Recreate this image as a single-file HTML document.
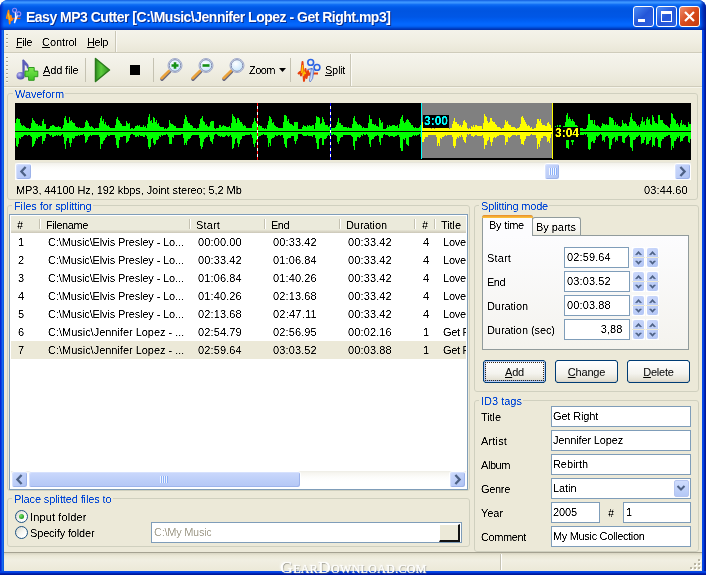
<!DOCTYPE html>
<html><head><meta charset="utf-8"><title>Easy MP3 Cutter</title>
<style>
html,body{margin:0;padding:0;background:#fff;}
body{width:706px;height:575px;position:relative;overflow:hidden;font-family:"Liberation Sans",sans-serif;font-size:11px;color:#000;}
.abs{position:absolute;}
.t{position:absolute;white-space:nowrap;line-height:13px;height:13px;will-change:transform;filter:url(#crisp);}
.blue{color:#0046d5;}
.nf{filter:none;}
u{text-decoration:underline;}
#win{position:absolute;left:0;top:0;width:706px;height:575px;background:#0054e3;border-radius:8px 8px 0 0;overflow:hidden;}
#title{position:absolute;left:0;top:0;width:706px;height:30px;background:linear-gradient(to bottom,#0a55da 0px,#2a7ff5 1px,#3c96ff 2.5px,#2c87fb 3.5px,#1270f5 4.5px,#0562ef 6px,#0058e6 8px,#0055e1 11px,#0057e6 17px,#0060f5 21px,#0468ff 24px,#0464f8 26px,#0058e8 27px,#0048d0 28px,#0038ba 29px,#002fa8 30px);}
#client{position:absolute;left:4px;top:30px;width:698px;height:541px;background:#ece9d8;}
.gb{position:absolute;border:1px solid #d0d0bf;border-radius:3px;box-sizing:border-box;}
.gbl{position:absolute;background:#ece9d8;height:1px;}
.edit{background:#fff;border:1px solid #7f9db9;box-sizing:border-box;}
.btn{position:absolute;box-sizing:border-box;border:1px solid #003c74;border-radius:3px;background:linear-gradient(#fff 0%,#f4f3ee 60%,#e4e1d4 90%,#d6d0c5 100%);text-align:center;line-height:21px;padding-top:1px;letter-spacing:-0.2px;will-change:transform;filter:url(#crisp);}
.cap{position:absolute;top:6px;width:21px;height:21px;box-sizing:border-box;border:1px solid #fff;border-radius:3px;}
.sbtn{position:absolute;width:17px;height:17px;box-sizing:border-box;border:1px solid #fff;border-radius:3px;background:linear-gradient(135deg,#cddafc,#b7c9f6 70%,#adc1f3);box-shadow:inset -1px -1px 0 #9db3ea,inset 1px 1px 0 #d6e1fd;}
</style></head><body>
<svg width="0" height="0" style="position:absolute"><filter id="crisp" x="-0.1" y="-0.2" width="1.2" height="1.4" color-interpolation-filters="sRGB"><feComponentTransfer><feFuncA type="table" tableValues="0 0 0.55 1 1"/></feComponentTransfer></filter></svg>
<div id="win">
<div id="title"></div>
<div class="abs" style="left:0;top:0;width:4px;height:30px;background:linear-gradient(to right,rgba(0,30,180,0.9),rgba(0,40,200,0.5) 50%,rgba(0,60,220,0))"></div>
<div class="abs" style="left:700px;top:0;width:6px;height:30px;background:linear-gradient(to right,rgba(0,40,190,0),rgba(0,30,170,0.7) 50%,rgba(0,20,140,0.95))"></div>
<div class="abs" style="left:0;top:30px;width:4px;height:545px;background:linear-gradient(to right,#0019cf 0,#0831d9 1px,#166aee 2.5px,#0855dd 4px)"></div>
<div class="abs" style="left:702px;top:30px;width:4px;height:545px;background:linear-gradient(to right,#0a4de6 0,#0340e0 1.5px,#0024b4 2.5px,#00138c 4px)"></div>
<div class="abs" style="left:0;top:571px;width:706px;height:4px;background:linear-gradient(#0a4de6 0,#0340e0 1.5px,#0024b4 2.5px,#00138c 4px)"></div>
<svg class="abs" style="left:5px;top:7px" width="18" height="18" viewBox="0 0 18 18"><path d="M1,11.4 L15.5,11.4" stroke="#f0600c" stroke-width="1.2"/><path d="M1.6,11.4 L3.5,3.6 L4.7,16.6 L5.8,8.6 L6.7,13.4 L7.6,11.4" fill="none" stroke="#ff8a12" stroke-width="1.7" stroke-linejoin="round"/><path d="M3.5,6.5 L4.3,13" stroke="#ffe020" stroke-width="1"/><circle cx="9.6" cy="3.2" r="2" fill="none" stroke="#9a8cf6" stroke-width="1.1"/><circle cx="13.8" cy="6.9" r="2" fill="none" stroke="#9a8cf6" stroke-width="1.1"/><path d="M10.4,5.4 L10.6,10 L9.4,16.2 M12.4,8.4 L9.4,16.2" stroke="#f2f4ff" stroke-width="1.3" fill="none"/></svg>
<div class="t nf" style="left:25.8px;top:9px;font-size:14px;font-weight:bold;color:#fff;line-height:16px;height:16px;letter-spacing:-0.5px;text-shadow:1px 1px 0 #0a2a8a">Easy MP3 Cutter [C:\Music\Jennifer Lopez - Get Right.mp3]</div>
<div class="cap" style="left:633px;background:linear-gradient(135deg,#4c8cf5,#2456d8 50%,#2d62e0)"><div class="abs" style="left:4px;top:12px;width:7px;height:3px;background:#fff"></div></div>
<div class="cap" style="left:656px;background:linear-gradient(135deg,#4c8cf5,#2456d8 50%,#2d62e0)"><div class="abs" style="left:4px;top:4px;width:11px;height:11px;box-sizing:border-box;border:1px solid #fff;border-top-width:3px"></div></div>
<div class="cap" style="left:679px;background:linear-gradient(135deg,#ee8c6c,#d84a1c 50%,#c43c10)"><svg width="19" height="19" viewBox="0 0 19 19" style="position:absolute;left:0;top:0"><path d="M5,5 L14,14 M14,5 L5,14" stroke="#fff" stroke-width="2.2"/></svg></div>

<div id="client">
<!-- offset: client origin is (4,30); use wrapper to keep absolute page coords -->
<div class="abs" style="left:-4px;top:-30px;width:706px;height:575px">

<!-- menubar & toolbar -->
<div class="abs" style="left:4px;top:30px;width:698px;height:23px;background:linear-gradient(#f4f3ea,#f0eee2 50%,#e9e6d6)"></div>
<div class="abs" style="left:4px;top:52px;width:698px;height:1px;background:#cfccbb"></div>
<div class="abs" style="left:4px;top:53px;width:698px;height:1px;background:#f7f6ee"></div>
<div class="abs" style="left:4px;top:54px;width:698px;height:32px;background:linear-gradient(#f5f4ec,#f0eee3 50%,#e8e5d5)"></div>
<div class="abs" style="left:4px;top:86px;width:698px;height:1px;background:#cfccbb"></div>
<div class="abs" style="left:4px;top:87px;width:698px;height:1px;background:#f5f4ea"></div>
<div class="abs" style="left:6px;top:34px;width:2px;height:14px;background:repeating-linear-gradient(#a5a291 0 1px,#f8f7f0 1px 2px,transparent 2px 4px)"></div>
<div class="abs" style="left:6px;top:57px;width:2px;height:26px;background:repeating-linear-gradient(#a5a291 0 1px,#f8f7f0 1px 2px,transparent 2px 4px)"></div>
<div class="abs" style="left:115px;top:31px;width:1px;height:21px;background:#cac7b6"></div>
<div class="abs" style="left:116px;top:31px;width:1px;height:21px;background:#fbfaf6"></div>
<div class="abs" style="left:350px;top:54px;width:1px;height:32px;background:#cac7b6"></div>
<div class="abs" style="left:351px;top:54px;width:1px;height:32px;background:#fbfaf6"></div>
<div class="t " style="left:16px;top:36px;letter-spacing:-0.43px;"><u>F</u>ile</div><div class="t " style="left:42px;top:36px;letter-spacing:-0.07px;"><u>C</u>ontrol</div><div class="t " style="left:87px;top:36px;letter-spacing:-0.41px;"><u>H</u>elp</div>
<div class="t " style="left:43px;top:64px;letter-spacing:-0.15px;"><u>A</u>dd file</div><div class="t " style="left:249px;top:64px;letter-spacing:-0.53px;">Zoom</div><div class="t " style="left:324.5px;top:64px;letter-spacing:-0.28px;"><u>S</u>plit</div>
<div class="abs" style="left:85px;top:58px;width:1px;height:24px;background:#c5c2b2"></div>
<div class="abs" style="left:153px;top:58px;width:1px;height:24px;background:#c5c2b2"></div>
<div class="abs" style="left:290px;top:58px;width:1px;height:24px;background:#c5c2b2"></div>
<!-- add file icon -->
<svg class="abs" style="left:12px;top:56px" width="30" height="28" viewBox="0 0 30 28"><defs><radialGradient id="nh" cx="0.35" cy="0.35" r="0.75"><stop offset="0" stop-color="#c4c4f4"/><stop offset="0.5" stop-color="#6c6cc8"/><stop offset="1" stop-color="#4444a0"/></radialGradient><linearGradient id="pl" x1="0" y1="0" x2="0" y2="1"><stop offset="0" stop-color="#7be84f"/><stop offset="1" stop-color="#3fc224"/></linearGradient></defs>
<path d="M10.6,4 C11.5,3.6 12.2,4 12.6,4.8 C13.6,6.8 16.6,7.6 16.4,11 C16.3,12 15.6,12.6 15.2,12.2 C15.4,9.8 13.6,9.2 12.4,8.6 L12.4,19.5 L10.8,19.5 Z" fill="#5d5dbc" stroke="#4a4aa8" stroke-width="0.5"/>
<ellipse cx="8.6" cy="19.8" rx="4.1" ry="3.8" fill="url(#nh)"/>
<path d="M16.6,11.5 h5.6 v3.6 h3.6 v5.6 h-3.6 v3.6 h-5.6 v-3.6 h-3.6 v-5.6 h3.6z" fill="url(#pl)" stroke="#2f9a1f" stroke-width="1" stroke-linejoin="round"/>
</svg>
<!-- play -->
<svg class="abs" style="left:94px;top:57px" width="18" height="26" viewBox="0 0 18 26"><defs><linearGradient id="pg" x1="0" y1="0" x2="1" y2="0"><stop offset="0" stop-color="#2f8f1f"/><stop offset="0.4" stop-color="#5ccc3c"/><stop offset="1" stop-color="#2f8f1f"/></linearGradient></defs><path d="M1.5,1.5 L15.5,13 L1.5,24.5Z" fill="url(#pg)" stroke="#2a7a1c" stroke-width="1.5" stroke-linejoin="round"/></svg>
<div class="abs" style="left:130px;top:65px;width:10px;height:10px;background:#000"></div>
<!-- magnifiers -->
<svg class="abs" style="left:160px;top:56px" width="26" height="26" viewBox="0 0 26 26"><defs><radialGradient id="g160" cx="0.4" cy="0.35" r="0.7"><stop offset="0" stop-color="#ffffff"/><stop offset="1" stop-color="#c4e4fb"/></radialGradient></defs><path d="M2,23.2 L9.6,15.6" stroke="#66667e" stroke-width="3.4" stroke-linecap="round"/><path d="M1.6,22.2 L9.2,14.8" stroke="#e9a23b" stroke-width="2.6" stroke-linecap="round"/><circle cx="15" cy="9.5" r="7" fill="#eef7ff" stroke="#9aa3c4" stroke-width="0.9"/><circle cx="15" cy="9.5" r="5.8" fill="url(#g160)" stroke="#7f88ad" stroke-width="1"/><path d="M11.5,9.5 h7 M15,6.2 v6.6" stroke="#149014" stroke-width="2.6"/></svg>
<svg class="abs" style="left:191px;top:56px" width="26" height="26" viewBox="0 0 26 26"><defs><radialGradient id="g191" cx="0.4" cy="0.35" r="0.7"><stop offset="0" stop-color="#ffffff"/><stop offset="1" stop-color="#c4e4fb"/></radialGradient></defs><path d="M2,23.2 L9.6,15.6" stroke="#66667e" stroke-width="3.4" stroke-linecap="round"/><path d="M1.6,22.2 L9.2,14.8" stroke="#e9a23b" stroke-width="2.6" stroke-linecap="round"/><circle cx="15" cy="9.5" r="7" fill="#eef7ff" stroke="#9aa3c4" stroke-width="0.9"/><circle cx="15" cy="9.5" r="5.8" fill="url(#g191)" stroke="#7f88ad" stroke-width="1"/><path d="M11.5,9.5 h7" stroke="#149014" stroke-width="2.6"/></svg>
<svg class="abs" style="left:222px;top:56px" width="26" height="26" viewBox="0 0 26 26"><defs><radialGradient id="g222" cx="0.4" cy="0.35" r="0.7"><stop offset="0" stop-color="#ffffff"/><stop offset="1" stop-color="#c4e4fb"/></radialGradient></defs><path d="M2,23.2 L9.6,15.6" stroke="#66667e" stroke-width="3.4" stroke-linecap="round"/><path d="M1.6,22.2 L9.2,14.8" stroke="#e9a23b" stroke-width="2.6" stroke-linecap="round"/><circle cx="15" cy="9.5" r="7" fill="#eef7ff" stroke="#9aa3c4" stroke-width="0.9"/><circle cx="15" cy="9.5" r="5.8" fill="url(#g222)" stroke="#7f88ad" stroke-width="1"/></svg>
<svg class="abs" style="left:279px;top:68px" width="7" height="4" viewBox="0 0 7 4"><path d="M0,0 h7 l-3.5,4z" fill="#000"/></svg>
<!-- split icon -->
<svg class="abs" style="left:296px;top:56px" width="26" height="28" viewBox="0 0 26 28"><defs><linearGradient id="bl" x1="0" y1="0" x2="1" y2="0"><stop offset="0" stop-color="#ffffff"/><stop offset="1" stop-color="#7fa8f0"/></linearGradient></defs>
<path d="M2,18 L4,16 L5,19.5 L6.5,6 L8,25 L9.5,13 L10.5,22 L12,15 L13,19 L14,17.6 L22,17.6" fill="none" stroke="#e8400c" stroke-width="2" stroke-linejoin="round"/>
<path d="M5.6,17 L6.5,9 L7.4,20 L8.6,16 L9.6,18" fill="none" stroke="#ffc400" stroke-width="1.1"/>
<path d="M15.4,12.4 L18,14.2 L16.6,22.5 L14.2,26 L13.4,25 Z" fill="url(#bl)" stroke="#4a68c8" stroke-width="0.7"/>
<path d="M11.5,13.5 L16.5,12.5" stroke="#4a68c8" stroke-width="1.2"/>
<circle cx="14.7" cy="6.4" r="2.9" fill="none" stroke="#2a63e4" stroke-width="1.6"/>
<circle cx="21" cy="11.4" r="2.9" fill="none" stroke="#2a63e4" stroke-width="1.6"/>
</svg>

<!-- Waveform group -->
<div class="gb" style="left:7px;top:93px;width:691px;height:107px"></div>
<div class="gbl" style="left:13px;top:93px;width:52px"></div>
<div class="t blue" style="left:15px;top:88px;letter-spacing:-0.09px;">Waveform</div>
<svg class="abs" style="left:15px;top:103px" width="676" height="57" viewBox="0 0 676 57" shape-rendering="crispEdges">
<rect width="676" height="57" fill="#000"/>
<rect x="407" y="0" width="130" height="55" fill="#808080"/>
<path d="M0,20 L1,20 L1,16 L2,16 L2,15 L3,15 L3,16 L4,16 L4,16 L5,16 L5,20 L6,20 L6,22 L7,22 L7,23 L8,23 L8,22 L9,22 L9,23 L10,23 L10,24 L11,24 L11,25 L12,25 L12,25 L13,25 L13,25 L14,25 L14,26 L15,26 L15,25 L16,25 L16,20 L17,20 L17,15 L18,15 L18,17 L19,17 L19,18 L20,18 L20,20 L21,20 L21,21 L22,21 L22,21 L23,21 L23,23 L24,23 L24,22 L25,22 L25,23 L26,23 L26,23 L27,23 L27,18 L28,18 L28,16 L29,16 L29,21 L30,21 L30,21 L31,21 L31,26 L32,26 L32,26 L33,26 L33,26 L34,26 L34,25 L35,25 L35,23 L36,23 L36,23 L37,23 L37,22 L38,22 L38,22 L39,22 L39,23 L40,23 L40,24 L41,24 L41,24 L42,24 L42,24 L43,24 L43,23 L44,23 L44,24 L45,24 L45,24 L46,24 L46,26 L47,26 L47,25 L48,25 L48,22 L49,22 L49,15 L50,15 L50,13 L51,13 L51,17 L52,17 L52,20 L53,20 L53,20 L54,20 L54,14 L55,14 L55,18 L56,18 L56,17 L57,17 L57,19 L58,19 L58,20 L59,20 L59,20 L60,20 L60,23 L61,23 L61,24 L62,24 L62,24 L63,24 L63,25 L64,25 L64,24 L65,24 L65,25 L66,25 L66,25 L67,25 L67,25 L68,25 L68,25 L69,25 L69,24 L70,24 L70,19 L71,19 L71,17 L72,17 L72,18 L73,18 L73,20 L74,20 L74,23 L75,23 L75,24 L76,24 L76,23 L77,23 L77,24 L78,24 L78,25 L79,25 L79,26 L80,26 L80,25 L81,25 L81,25 L82,25 L82,25 L83,25 L83,25 L84,25 L84,20 L85,20 L85,15 L86,15 L86,13 L87,13 L87,18 L88,18 L88,16 L89,16 L89,21 L90,21 L90,19 L91,19 L91,22 L92,22 L92,23 L93,23 L93,22 L94,22 L94,24 L95,24 L95,25 L96,25 L96,25 L97,25 L97,25 L98,25 L98,25 L99,25 L99,25 L100,25 L100,22 L101,22 L101,16 L102,16 L102,14 L103,14 L103,17 L104,17 L104,18 L105,18 L105,20 L106,20 L106,21 L107,21 L107,23 L108,23 L108,23 L109,23 L109,23 L110,23 L110,23 L111,23 L111,18 L112,18 L112,20 L113,20 L113,21 L114,21 L114,20 L115,20 L115,26 L116,26 L116,25 L117,25 L117,25 L118,25 L118,26 L119,26 L119,25 L120,25 L120,23 L121,23 L121,23 L122,23 L122,22 L123,22 L123,23 L124,23 L124,22 L125,22 L125,24 L126,24 L126,24 L127,24 L127,24 L128,24 L128,22 L129,22 L129,24 L130,24 L130,23 L131,23 L131,25 L132,25 L132,21 L133,21 L133,14 L134,14 L134,11 L135,11 L135,18 L136,18 L136,17 L137,17 L137,20 L138,20 L138,14 L139,14 L139,15 L140,15 L140,19 L141,19 L141,17 L142,17 L142,21 L143,21 L143,20 L144,20 L144,23 L145,23 L145,24 L146,24 L146,24 L147,24 L147,24 L148,24 L148,24 L149,24 L149,26 L150,26 L150,25 L151,25 L151,26 L152,26 L152,25 L153,25 L153,24 L154,24 L154,17 L155,17 L155,20 L156,20 L156,21 L157,21 L157,21 L158,21 L158,22 L159,22 L159,23 L160,23 L160,23 L161,23 L161,25 L162,25 L162,25 L163,25 L163,25 L164,25 L164,25 L165,25 L165,25 L166,25 L166,25 L167,25 L167,25 L168,25 L168,21 L169,21 L169,16 L170,16 L170,12 L171,12 L171,14 L172,14 L172,18 L173,18 L173,20 L174,20 L174,20 L175,20 L175,22 L176,22 L176,22 L177,22 L177,23 L178,23 L178,25 L179,25 L179,25 L180,25 L180,25 L181,25 L181,26 L182,26 L182,25 L183,25 L183,25 L184,25 L184,21 L185,21 L185,16 L186,16 L186,15 L187,15 L187,13 L188,13 L188,18 L189,18 L189,19 L190,19 L190,22 L191,22 L191,21 L192,21 L192,23 L193,23 L193,24 L194,24 L194,23 L195,23 L195,19 L196,19 L196,18 L197,18 L197,18 L198,18 L198,18 L199,18 L199,25 L200,25 L200,26 L201,26 L201,25 L202,25 L202,25 L203,25 L203,25 L204,25 L204,22 L205,22 L205,22 L206,22 L206,24 L207,24 L207,23 L208,23 L208,22 L209,22 L209,23 L210,23 L210,23 L211,23 L211,24 L212,24 L212,24 L213,24 L213,24 L214,24 L214,23 L215,23 L215,25 L216,25 L216,20 L217,20 L217,11 L218,11 L218,13 L219,13 L219,14 L220,14 L220,16 L221,16 L221,20 L222,20 L222,15 L223,15 L223,15 L224,15 L224,17 L225,17 L225,19 L226,19 L226,19 L227,19 L227,21 L228,21 L228,23 L229,23 L229,22 L230,22 L230,23 L231,23 L231,25 L232,25 L232,25 L233,25 L233,25 L234,25 L234,25 L235,25 L235,25 L236,25 L236,25 L237,25 L237,21 L238,21 L238,19 L239,19 L239,15 L240,15 L240,18 L241,18 L241,20 L242,20 L242,22 L243,22 L243,23 L244,23 L244,22 L245,22 L245,23 L246,23 L246,23 L247,23 L247,25 L248,25 L248,25 L249,25 L249,26 L250,26 L250,25 L251,25 L251,26 L252,26 L252,22 L253,22 L253,18 L254,18 L254,13 L255,13 L255,14 L256,14 L256,16 L257,16 L257,20 L258,20 L258,19 L259,19 L259,22 L260,22 L260,23 L261,23 L261,24 L262,24 L262,24 L263,24 L263,25 L264,25 L264,25 L265,25 L265,25 L266,25 L266,25 L267,25 L267,25 L268,25 L268,19 L269,19 L269,12 L270,12 L270,12 L271,12 L271,13 L272,13 L272,18 L273,18 L273,16 L274,16 L274,20 L275,20 L275,21 L276,21 L276,21 L277,21 L277,22 L278,22 L278,23 L279,23 L279,19 L280,19 L280,19 L281,19 L281,19 L282,19 L282,19 L283,19 L283,26 L284,26 L284,26 L285,26 L285,26 L286,26 L286,26 L287,26 L287,24 L288,24 L288,22 L289,22 L289,23 L290,23 L290,23 L291,23 L291,24 L292,24 L292,22 L293,22 L293,23 L294,23 L294,22 L295,22 L295,23 L296,23 L296,23 L297,23 L297,22 L298,22 L298,22 L299,22 L299,26 L300,26 L300,20 L301,20 L301,13 L302,13 L302,14 L303,14 L303,14 L304,14 L304,15 L305,15 L305,21 L306,21 L306,20 L307,20 L307,14 L308,14 L308,16 L309,16 L309,19 L310,19 L310,22 L311,22 L311,22 L312,22 L312,22 L313,22 L313,24 L314,24 L314,23 L315,23 L315,25 L316,25 L316,25 L317,25 L317,25 L318,25 L318,25 L319,25 L319,25 L320,25 L320,24 L321,24 L321,22 L322,22 L322,19 L323,19 L323,15 L324,15 L324,20 L325,20 L325,20 L326,20 L326,22 L327,22 L327,22 L328,22 L328,24 L329,24 L329,24 L330,24 L330,24 L331,24 L331,24 L332,24 L332,25 L333,25 L333,24 L334,24 L334,25 L335,25 L335,25 L336,25 L336,25 L337,25 L337,21 L338,21 L338,15 L339,15 L339,13 L340,13 L340,18 L341,18 L341,19 L342,19 L342,21 L343,21 L343,22 L344,22 L344,21 L345,21 L345,22 L346,22 L346,23 L347,23 L347,25 L348,25 L348,24 L349,24 L349,25 L350,25 L350,25 L351,25 L351,25 L352,25 L352,25 L353,25 L353,20 L354,20 L354,12 L355,12 L355,16 L356,16 L356,16 L357,16 L357,21 L358,21 L358,21 L359,21 L359,22 L360,22 L360,21 L361,21 L361,23 L362,23 L362,23 L363,23 L363,24 L364,24 L364,15 L365,15 L365,17 L366,17 L366,20 L367,20 L367,19 L368,19 L368,26 L369,26 L369,26 L370,26 L370,26 L371,26 L371,25 L372,25 L372,22 L373,22 L373,24 L374,24 L374,22 L375,22 L375,23 L376,23 L376,23 L377,23 L377,22 L378,22 L378,22 L379,22 L379,22 L380,22 L380,23 L381,23 L381,23 L382,23 L382,22 L383,22 L383,25 L384,25 L384,21 L385,21 L385,16 L386,16 L386,14 L387,14 L387,12 L388,12 L388,18 L389,18 L389,20 L390,20 L390,19 L391,19 L391,17 L392,17 L392,16 L393,16 L393,17 L394,17 L394,19 L395,19 L395,20 L396,20 L396,22 L397,22 L397,22 L398,22 L398,24 L399,24 L399,25 L400,25 L400,24 L401,24 L401,25 L402,25 L402,25 L403,25 L403,25 L404,25 L404,24 L405,24 L405,22 L406,22 L406,15 L407,15 L407,42 L406,42 L406,34 L405,34 L405,31 L404,31 L404,32 L403,32 L403,32 L402,32 L402,33 L401,33 L401,32 L400,32 L400,33 L399,33 L399,32 L398,32 L398,33 L397,33 L397,34 L396,34 L396,34 L395,34 L395,34 L394,34 L394,43 L393,43 L393,42 L392,42 L392,41 L391,41 L391,35 L390,35 L390,37 L389,37 L389,36 L388,36 L388,48 L387,48 L387,48 L386,48 L386,45 L385,45 L385,34 L384,34 L384,32 L383,32 L383,32 L382,32 L382,33 L381,33 L381,33 L380,33 L380,34 L379,34 L379,34 L378,34 L378,33 L377,33 L377,33 L376,33 L376,33 L375,33 L375,34 L374,34 L374,33 L373,33 L373,32 L372,32 L372,32 L371,32 L371,32 L370,32 L370,31 L369,31 L369,32 L368,32 L368,35 L367,35 L367,35 L366,35 L366,42 L365,42 L365,39 L364,39 L364,33 L363,33 L363,32 L362,32 L362,33 L361,33 L361,33 L360,33 L360,34 L359,34 L359,36 L358,36 L358,36 L357,36 L357,37 L356,37 L356,44 L355,44 L355,41 L354,41 L354,34 L353,34 L353,32 L352,32 L352,31 L351,31 L351,32 L350,32 L350,32 L349,32 L349,31 L348,31 L348,33 L347,33 L347,32 L346,32 L346,34 L345,34 L345,35 L344,35 L344,34 L343,34 L343,34 L342,34 L342,38 L341,38 L341,38 L340,38 L340,47 L339,47 L339,43 L338,43 L338,34 L337,34 L337,33 L336,33 L336,32 L335,32 L335,32 L334,32 L334,32 L333,32 L333,32 L332,32 L332,32 L331,32 L331,32 L330,32 L330,32 L329,32 L329,32 L328,32 L328,34 L327,34 L327,34 L326,34 L326,35 L325,35 L325,38 L324,38 L324,41 L323,41 L323,39 L322,39 L322,33 L321,33 L321,32 L320,32 L320,32 L319,32 L319,31 L318,31 L318,32 L317,32 L317,32 L316,32 L316,31 L315,31 L315,33 L314,33 L314,32 L313,32 L313,33 L312,33 L312,35 L311,35 L311,36 L310,36 L310,36 L309,36 L309,42 L308,42 L308,42 L307,42 L307,35 L306,35 L306,35 L305,35 L305,36 L304,36 L304,46 L303,46 L303,46 L302,46 L302,40 L301,40 L301,35 L300,35 L300,32 L299,32 L299,32 L298,32 L298,34 L297,34 L297,33 L296,33 L296,33 L295,33 L295,33 L294,33 L294,33 L293,33 L293,32 L292,32 L292,33 L291,33 L291,33 L290,33 L290,33 L289,33 L289,33 L288,33 L288,32 L287,32 L287,31 L286,31 L286,31 L285,31 L285,31 L284,31 L284,31 L283,31 L283,36 L282,36 L282,38 L281,38 L281,41 L280,41 L280,38 L279,38 L279,33 L278,33 L278,33 L277,33 L277,33 L276,33 L276,35 L275,35 L275,35 L274,35 L274,35 L273,35 L273,36 L272,36 L272,45 L271,45 L271,44 L270,44 L270,41 L269,41 L269,35 L268,35 L268,32 L267,32 L267,32 L266,32 L266,33 L265,33 L265,32 L264,32 L264,32 L263,32 L263,33 L262,33 L262,33 L261,33 L261,32 L260,32 L260,34 L259,34 L259,35 L258,35 L258,35 L257,35 L257,36 L256,36 L256,43 L255,43 L255,40 L254,40 L254,44 L253,44 L253,35 L252,35 L252,32 L251,32 L251,32 L250,32 L250,32 L249,32 L249,31 L248,31 L248,32 L247,32 L247,32 L246,32 L246,33 L245,33 L245,33 L244,33 L244,34 L243,34 L243,35 L242,35 L242,37 L241,37 L241,40 L240,40 L240,44 L239,44 L239,41 L238,41 L238,35 L237,35 L237,32 L236,32 L236,31 L235,31 L235,32 L234,32 L234,32 L233,32 L233,32 L232,32 L232,32 L231,32 L231,32 L230,32 L230,33 L229,33 L229,33 L228,33 L228,33 L227,33 L227,36 L226,36 L226,37 L225,37 L225,41 L224,41 L224,44 L223,44 L223,40 L222,40 L222,35 L221,35 L221,36 L220,36 L220,41 L219,41 L219,45 L218,45 L218,46 L217,46 L217,34 L216,34 L216,32 L215,32 L215,33 L214,33 L214,34 L213,34 L213,33 L212,33 L212,32 L211,32 L211,33 L210,33 L210,34 L209,34 L209,34 L208,34 L208,34 L207,34 L207,33 L206,33 L206,34 L205,34 L205,33 L204,33 L204,33 L203,33 L203,32 L202,32 L202,31 L201,31 L201,31 L200,31 L200,32 L199,32 L199,36 L198,36 L198,41 L197,41 L197,39 L196,39 L196,38 L195,38 L195,34 L194,34 L194,32 L193,32 L193,34 L192,34 L192,34 L191,34 L191,35 L190,35 L190,36 L189,36 L189,39 L188,39 L188,44 L187,44 L187,46 L186,46 L186,43 L185,43 L185,35 L184,35 L184,32 L183,32 L183,32 L182,32 L182,32 L181,32 L181,32 L180,32 L180,32 L179,32 L179,32 L178,32 L178,32 L177,32 L177,33 L176,33 L176,35 L175,35 L175,36 L174,36 L174,36 L173,36 L173,38 L172,38 L172,42 L171,42 L171,40 L170,40 L170,42 L169,42 L169,35 L168,35 L168,31 L167,31 L167,31 L166,31 L166,32 L165,32 L165,32 L164,32 L164,32 L163,32 L163,32 L162,32 L162,32 L161,32 L161,32 L160,32 L160,32 L159,32 L159,35 L158,35 L158,34 L157,34 L157,41 L156,41 L156,41 L155,41 L155,41 L154,41 L154,34 L153,34 L153,32 L152,32 L152,31 L151,31 L151,32 L150,32 L150,32 L149,32 L149,32 L148,32 L148,33 L147,33 L147,32 L146,32 L146,34 L145,34 L145,33 L144,33 L144,36 L143,36 L143,37 L142,37 L142,37 L141,37 L141,41 L140,41 L140,42 L139,42 L139,40 L138,40 L138,35 L137,35 L137,36 L136,36 L136,44 L135,44 L135,46 L134,46 L134,44 L133,44 L133,36 L132,36 L132,33 L131,33 L131,32 L130,32 L130,34 L129,34 L129,34 L128,34 L128,33 L127,33 L127,33 L126,33 L126,33 L125,33 L125,32 L124,32 L124,34 L123,34 L123,33 L122,33 L122,34 L121,34 L121,34 L120,34 L120,32 L119,32 L119,32 L118,32 L118,31 L117,31 L117,31 L116,31 L116,32 L115,32 L115,35 L114,35 L114,38 L113,38 L113,39 L112,39 L112,40 L111,40 L111,33 L110,33 L110,33 L109,33 L109,33 L108,33 L108,34 L107,34 L107,34 L106,34 L106,34 L105,34 L105,37 L104,37 L104,45 L103,45 L103,45 L102,45 L102,42 L101,42 L101,35 L100,35 L100,32 L99,32 L99,32 L98,32 L98,32 L97,32 L97,32 L96,32 L96,32 L95,32 L95,33 L94,33 L94,33 L93,33 L93,32 L92,32 L92,34 L91,34 L91,35 L90,35 L90,37 L89,37 L89,38 L88,38 L88,41 L87,41 L87,41 L86,41 L86,46 L85,46 L85,34 L84,34 L84,32 L83,32 L83,32 L82,32 L82,32 L81,32 L81,32 L80,32 L80,32 L79,32 L79,32 L78,32 L78,32 L77,32 L77,33 L76,33 L76,32 L75,32 L75,33 L74,33 L74,34 L73,34 L73,37 L72,37 L72,39 L71,39 L71,40 L70,40 L70,33 L69,33 L69,31 L68,31 L68,32 L67,32 L67,32 L66,32 L66,32 L65,32 L65,33 L64,33 L64,32 L63,32 L63,33 L62,33 L62,33 L61,33 L61,33 L60,33 L60,35 L59,35 L59,36 L58,36 L58,35 L57,35 L57,40 L56,40 L56,44 L55,44 L55,40 L54,40 L54,35 L53,35 L53,35 L52,35 L52,38 L51,38 L51,46 L50,46 L50,41 L49,41 L49,34 L48,34 L48,31 L47,31 L47,32 L46,32 L46,33 L45,33 L45,33 L44,33 L44,32 L43,32 L43,33 L42,33 L42,32 L41,32 L41,33 L40,33 L40,33 L39,33 L39,34 L38,34 L38,34 L37,34 L37,32 L36,32 L36,33 L35,33 L35,32 L34,32 L34,31 L33,31 L33,31 L32,31 L32,31 L31,31 L31,35 L30,35 L30,38 L29,38 L29,38 L28,38 L28,41 L27,41 L27,33 L26,33 L26,33 L25,33 L25,34 L24,34 L24,34 L23,34 L23,36 L22,36 L22,35 L21,35 L21,38 L20,38 L20,41 L19,41 L19,43 L18,43 L18,44 L17,44 L17,34 L16,34 L16,33 L15,33 L15,32 L14,32 L14,32 L13,32 L13,33 L12,33 L12,32 L11,32 L11,32 L10,32 L10,32 L9,32 L9,33 L8,33 L8,34 L7,34 L7,34 L6,34 L6,36 L5,36 L5,35 L4,35 L4,41 L3,41 L3,44 L2,44 L2,43 L1,43 L1,35 L0,35Z" fill="#00ff00"/>
<path d="M407,19 L408,19 L408,20 L409,20 L409,18 L410,18 L410,19 L411,19 L411,21 L412,21 L412,23 L413,23 L413,23 L414,23 L414,24 L415,24 L415,25 L416,25 L416,26 L417,26 L417,25 L418,25 L418,25 L419,25 L419,26 L420,26 L420,25 L421,25 L421,22 L422,22 L422,13 L423,13 L423,18 L424,18 L424,18 L425,18 L425,18 L426,18 L426,21 L427,21 L427,22 L428,22 L428,23 L429,23 L429,23 L430,23 L430,24 L431,24 L431,24 L432,24 L432,25 L433,25 L433,25 L434,25 L434,26 L435,26 L435,25 L436,25 L436,25 L437,25 L437,21 L438,21 L438,18 L439,18 L439,15 L440,15 L440,19 L441,19 L441,19 L442,19 L442,21 L443,21 L443,21 L444,21 L444,23 L445,23 L445,22 L446,22 L446,24 L447,24 L447,22 L448,22 L448,18 L449,18 L449,17 L450,17 L450,19 L451,19 L451,20 L452,20 L452,25 L453,25 L453,26 L454,26 L454,25 L455,25 L455,26 L456,26 L456,23 L457,23 L457,24 L458,24 L458,22 L459,22 L459,24 L460,24 L460,22 L461,22 L461,22 L462,22 L462,23 L463,23 L463,23 L464,23 L464,23 L465,23 L465,23 L466,23 L466,23 L467,23 L467,26 L468,26 L468,20 L469,20 L469,11 L470,11 L470,13 L471,13 L471,14 L472,14 L472,18 L473,18 L473,20 L474,20 L474,19 L475,19 L475,15 L476,15 L476,15 L477,15 L477,18 L478,18 L478,19 L479,19 L479,19 L480,19 L480,21 L481,21 L481,22 L482,22 L482,24 L483,24 L483,24 L484,24 L484,24 L485,24 L485,25 L486,25 L486,26 L487,26 L487,25 L488,25 L488,25 L489,25 L489,22 L490,22 L490,17 L491,17 L491,19 L492,19 L492,18 L493,18 L493,21 L494,21 L494,22 L495,22 L495,22 L496,22 L496,24 L497,24 L497,24 L498,24 L498,24 L499,24 L499,24 L500,24 L500,25 L501,25 L501,26 L502,26 L502,25 L503,25 L503,25 L504,25 L504,24 L505,24 L505,21 L506,21 L506,14 L507,14 L507,13 L508,13 L508,15 L509,15 L509,17 L510,17 L510,19 L511,19 L511,21 L512,21 L512,23 L513,23 L513,22 L514,22 L514,23 L515,23 L515,25 L516,25 L516,24 L517,24 L517,26 L518,26 L518,26 L519,26 L519,25 L520,25 L520,25 L521,25 L521,21 L522,21 L522,16 L523,16 L523,16 L524,16 L524,18 L525,18 L525,16 L526,16 L526,20 L527,20 L527,22 L528,22 L528,22 L529,22 L529,22 L530,22 L530,23 L531,23 L531,23 L532,23 L532,20 L533,20 L533,19 L534,19 L534,21 L535,21 L535,22 L536,22 L536,25 L537,25 L537,31 L536,31 L536,35 L535,35 L535,40 L534,40 L534,38 L533,38 L533,39 L532,39 L532,34 L531,34 L531,33 L530,33 L530,33 L529,33 L529,33 L528,33 L528,35 L527,35 L527,35 L526,35 L526,38 L525,38 L525,44 L524,44 L524,41 L523,41 L523,46 L522,46 L522,35 L521,35 L521,32 L520,32 L520,32 L519,32 L519,32 L518,32 L518,32 L517,32 L517,31 L516,31 L516,32 L515,32 L515,33 L514,33 L514,33 L513,33 L513,33 L512,33 L512,33 L511,33 L511,36 L510,36 L510,38 L509,38 L509,42 L508,42 L508,41 L507,41 L507,41 L506,41 L506,36 L505,36 L505,32 L504,32 L504,32 L503,32 L503,32 L502,32 L502,33 L501,33 L501,32 L500,32 L500,32 L499,32 L499,32 L498,32 L498,32 L497,32 L497,33 L496,33 L496,34 L495,34 L495,35 L494,35 L494,34 L493,34 L493,39 L492,39 L492,39 L491,39 L491,42 L490,42 L490,33 L489,33 L489,32 L488,32 L488,32 L487,32 L487,32 L486,32 L486,32 L485,32 L485,32 L484,32 L484,33 L483,33 L483,33 L482,33 L482,34 L481,34 L481,35 L480,35 L480,34 L479,34 L479,35 L478,35 L478,39 L477,39 L477,43 L476,43 L476,39 L475,39 L475,34 L474,34 L474,37 L473,37 L473,38 L472,38 L472,42 L471,42 L471,42 L470,42 L470,46 L469,46 L469,35 L468,35 L468,32 L467,32 L467,33 L466,33 L466,33 L465,33 L465,33 L464,33 L464,33 L463,33 L463,33 L462,33 L462,32 L461,32 L461,32 L460,32 L460,33 L459,33 L459,34 L458,34 L458,33 L457,33 L457,33 L456,33 L456,31 L455,31 L455,31 L454,31 L454,32 L453,32 L453,31 L452,31 L452,34 L451,34 L451,40 L450,40 L450,39 L449,39 L449,37 L448,37 L448,34 L447,34 L447,32 L446,32 L446,34 L445,34 L445,33 L444,33 L444,35 L443,35 L443,34 L442,34 L442,36 L441,36 L441,43 L440,43 L440,45 L439,45 L439,43 L438,43 L438,34 L437,34 L437,32 L436,32 L436,32 L435,32 L435,32 L434,32 L434,32 L433,32 L433,32 L432,32 L432,33 L431,33 L431,32 L430,32 L430,33 L429,33 L429,34 L428,34 L428,34 L427,34 L427,36 L426,36 L426,35 L425,35 L425,43 L424,43 L424,40 L423,40 L423,43 L422,43 L422,34 L421,34 L421,32 L420,32 L420,32 L419,32 L419,32 L418,32 L418,32 L417,32 L417,32 L416,32 L416,32 L415,32 L415,32 L414,32 L414,32 L413,32 L413,34 L412,34 L412,34 L411,34 L411,34 L410,34 L410,36 L409,36 L409,39 L408,39 L408,39 L407,39Z" fill="#ffff00"/>
<path d="M537,26 L538,26 L538,26 L539,26 L539,25 L540,25 L540,23 L541,23 L541,24 L542,24 L542,22 L543,22 L543,24 L544,24 L544,22 L545,22 L545,22 L546,22 L546,24 L547,24 L547,24 L548,24 L548,23 L549,23 L549,23 L550,23 L550,19 L551,19 L551,12 L552,12 L552,10 L553,10 L553,16 L554,16 L554,14 L555,14 L555,16 L556,16 L556,18 L557,18 L557,16 L558,16 L558,18 L559,18 L559,19 L560,19 L560,22 L561,22 L561,22 L562,22 L562,23 L563,23 L563,24 L564,24 L564,24 L565,24 L565,25 L566,25 L566,25 L567,25 L567,25 L568,25 L568,26 L569,26 L569,26 L570,26 L570,26 L571,26 L571,25 L572,25 L572,22 L573,22 L573,11 L574,11 L574,11 L575,11 L575,17 L576,17 L576,17 L577,17 L577,17 L578,17 L578,21 L579,21 L579,17 L580,17 L580,22 L581,22 L581,23 L582,23 L582,22 L583,22 L583,23 L584,23 L584,24 L585,24 L585,25 L586,25 L586,23 L587,23 L587,20 L588,20 L588,21 L589,21 L589,21 L590,21 L590,22 L591,22 L591,21 L592,21 L592,22 L593,22 L593,22 L594,22 L594,14 L595,14 L595,14 L596,14 L596,15 L597,15 L597,15 L598,15 L598,17 L599,17 L599,22 L600,22 L600,19 L601,19 L601,22 L602,22 L602,21 L603,21 L603,23 L604,23 L604,23 L605,23 L605,24 L606,24 L606,23 L607,23 L607,17 L608,17 L608,20 L609,20 L609,21 L610,21 L610,20 L611,20 L611,21 L612,21 L612,23 L613,23 L613,23 L614,23 L614,19 L615,19 L615,14 L616,14 L616,10 L617,10 L617,16 L618,16 L618,18 L619,18 L619,18 L620,18 L620,19 L621,19 L621,21 L622,21 L622,23 L623,23 L623,22 L624,22 L624,24 L625,24 L625,21 L626,21 L626,18 L627,18 L627,14 L628,14 L628,19 L629,19 L629,18 L630,18 L630,22 L631,22 L631,16 L632,16 L632,14 L633,14 L633,17 L634,17 L634,16 L635,16 L635,21 L636,21 L636,22 L637,22 L637,12 L638,12 L638,14 L639,14 L639,18 L640,18 L640,20 L641,20 L641,20 L642,20 L642,21 L643,21 L643,12 L644,12 L644,12 L645,12 L645,17 L646,17 L646,17 L647,17 L647,17 L648,17 L648,20 L649,20 L649,21 L650,21 L650,22 L651,22 L651,22 L652,22 L652,23 L653,23 L653,24 L654,24 L654,25 L655,25 L655,21 L656,21 L656,10 L657,10 L657,11 L658,11 L658,15 L659,15 L659,16 L660,16 L660,17 L661,17 L661,21 L662,21 L662,20 L663,20 L663,22 L664,22 L664,24 L665,24 L665,20 L666,20 L666,17 L667,17 L667,22 L668,22 L668,21 L669,21 L669,22 L670,22 L670,22 L671,22 L671,24 L672,24 L672,24 L673,24 L673,19 L674,19 L674,21 L675,21 L675,21 L676,21 L676,36 L675,36 L675,40 L674,40 L674,39 L673,39 L673,33 L672,33 L672,33 L671,33 L671,33 L670,33 L670,34 L669,34 L669,35 L668,35 L668,38 L667,38 L667,38 L666,38 L666,39 L665,39 L665,33 L664,33 L664,35 L663,35 L663,34 L662,34 L662,36 L661,36 L661,38 L660,38 L660,38 L659,38 L659,45 L658,45 L658,43 L657,43 L657,47 L656,47 L656,35 L655,35 L655,32 L654,32 L654,32 L653,32 L653,33 L652,33 L652,33 L651,33 L651,34 L650,34 L650,34 L649,34 L649,36 L648,36 L648,36 L647,36 L647,38 L646,38 L646,45 L645,45 L645,44 L644,44 L644,44 L643,44 L643,36 L642,36 L642,34 L641,34 L641,35 L640,35 L640,43 L639,43 L639,42 L638,42 L638,44 L637,44 L637,34 L636,34 L636,37 L635,37 L635,38 L634,38 L634,41 L633,41 L633,41 L632,41 L632,42 L631,42 L631,34 L630,34 L630,37 L629,37 L629,40 L628,40 L628,40 L627,40 L627,41 L626,41 L626,34 L625,34 L625,32 L624,32 L624,33 L623,33 L623,34 L622,34 L622,34 L621,34 L621,36 L620,36 L620,37 L619,37 L619,37 L618,37 L618,48 L617,48 L617,45 L616,45 L616,44 L615,44 L615,34 L614,34 L614,32 L613,32 L613,33 L612,33 L612,34 L611,34 L611,35 L610,35 L610,40 L609,40 L609,40 L608,40 L608,39 L607,39 L607,33 L606,33 L606,33 L605,33 L605,33 L604,33 L604,33 L603,33 L603,38 L602,38 L602,37 L601,37 L601,39 L600,39 L600,34 L599,34 L599,35 L598,35 L598,36 L597,36 L597,42 L596,42 L596,46 L595,46 L595,46 L594,46 L594,35 L593,35 L593,33 L592,33 L592,33 L591,33 L591,34 L590,34 L590,39 L589,39 L589,37 L588,37 L588,38 L587,38 L587,32 L586,32 L586,31 L585,31 L585,32 L584,32 L584,33 L583,33 L583,34 L582,34 L582,33 L581,33 L581,37 L580,37 L580,40 L579,40 L579,40 L578,40 L578,38 L577,38 L577,39 L576,39 L576,46 L575,46 L575,47 L574,47 L574,46 L573,46 L573,34 L572,34 L572,31 L571,31 L571,32 L570,32 L570,31 L569,31 L569,32 L568,32 L568,32 L567,32 L567,32 L566,32 L566,32 L565,32 L565,32 L564,32 L564,33 L563,33 L563,34 L562,34 L562,34 L561,34 L561,35 L560,35 L560,35 L559,35 L559,39 L558,39 L558,42 L557,42 L557,39 L556,39 L556,35 L555,35 L555,37 L554,37 L554,46 L553,46 L553,45 L552,45 L552,45 L551,45 L551,35 L550,35 L550,34 L549,34 L549,34 L548,34 L548,32 L547,32 L547,32 L546,32 L546,33 L545,33 L545,33 L544,33 L544,34 L543,34 L543,34 L542,34 L542,34 L541,34 L541,33 L540,33 L540,31 L539,31 L539,32 L538,32 L538,32 L537,32Z" fill="#00ff00"/>
<rect x="0" y="28" width="676" height="1" fill="#000"/>
<rect x="242" y="0" width="1" height="56" fill="#fff"/><rect x="242" y="0" width="1" height="3" fill="#ff0000"/><rect x="242" y="6" width="1" height="3" fill="#ff0000"/><rect x="242" y="12" width="1" height="3" fill="#ff0000"/><rect x="242" y="18" width="1" height="3" fill="#ff0000"/><rect x="242" y="24" width="1" height="3" fill="#ff0000"/><rect x="242" y="30" width="1" height="3" fill="#ff0000"/><rect x="242" y="36" width="1" height="3" fill="#ff0000"/><rect x="242" y="42" width="1" height="3" fill="#ff0000"/><rect x="242" y="48" width="1" height="3" fill="#ff0000"/><rect x="242" y="54" width="1" height="3" fill="#ff0000"/>
<rect x="315" y="0" width="1" height="56" fill="#fff"/><rect x="315" y="0" width="1" height="3" fill="#0000ff"/><rect x="315" y="6" width="1" height="3" fill="#0000ff"/><rect x="315" y="12" width="1" height="3" fill="#0000ff"/><rect x="315" y="18" width="1" height="3" fill="#0000ff"/><rect x="315" y="24" width="1" height="3" fill="#0000ff"/><rect x="315" y="30" width="1" height="3" fill="#0000ff"/><rect x="315" y="36" width="1" height="3" fill="#0000ff"/><rect x="315" y="42" width="1" height="3" fill="#0000ff"/><rect x="315" y="48" width="1" height="3" fill="#0000ff"/><rect x="315" y="54" width="1" height="3" fill="#0000ff"/>
<rect x="406" y="0" width="1" height="56" fill="#00ffff"/>
<rect x="537" y="0" width="1" height="56" fill="#ffff00"/>
<rect x="408" y="12" width="26" height="13" fill="#000"/>
<rect x="538" y="24" width="27" height="13" fill="#000"/>

</svg>
<div class="t" style="left:424px;top:115px;font-weight:bold;font-size:12px;color:#00ffff;letter-spacing:0">3:00</div>
<div class="t" style="left:555px;top:127px;font-weight:bold;font-size:12px;color:#ffff00;letter-spacing:0">3:04</div>
<!-- waveform scrollbar -->
<div class="abs" style="left:15px;top:162px;width:676px;height:18px;background:linear-gradient(#e2e0d4 0px,#f3f2ec 1.5px,#fbfbf8 5px,#fff 9px);"></div>
<div class="sbtn" style="left:15px;top:163px"><svg width="15" height="15" viewBox="0 0 15 15" style="position:absolute;left:0;top:0"><path d="M9.6,3 L5.4,7.5 L9.6,12" fill="none" stroke="#4d6185" stroke-width="2.3"/></svg></div>
<div class="sbtn" style="left:674px;top:163px"><svg width="15" height="15" viewBox="0 0 15 15" style="position:absolute;left:0;top:0"><path d="M5.4,3 L9.6,7.5 L5.4,12" fill="none" stroke="#4d6185" stroke-width="2.3"/></svg></div>
<div class="sbtn" style="left:544px;top:163px;width:16px"><div class="abs" style="left:4px;top:4px;width:8px;height:7px;background:repeating-linear-gradient(to right,#f4f8ff 0 1px,#8cb0f8 1px 2px)"></div></div>
<div class="t " style="left:16px;top:184px;letter-spacing:-0.08px;">MP3, 44100 Hz, 192 kbps, Joint stereo; 5,2 Mb</div>
<div class="t " style="left:644px;top:184px;letter-spacing:0.12px;">03:44.60</div>

<!-- Files group -->
<div class="gb" style="left:7px;top:205px;width:463px;height:286px"></div>
<div class="gbl" style="left:12px;top:205px;width:81px"></div>
<div class="t blue" style="left:14px;top:200px;letter-spacing:-0.10px;">Files for splitting</div>
<div class="abs" style="left:9px;top:214px;width:459px;height:276px;background:#fff;border:1px solid #7f9db9;box-sizing:border-box"></div>
<div class="abs" style="left:11px;top:216px;width:455px;height:17px;background:linear-gradient(#ebeadb 0%,#ebeadb 80%,#dedbcb 88%,#cbc7b8 100%)"></div>
<div class="abs" style="left:39px;top:219px;width:1px;height:10px;background:#c5c2b2"></div><div class="abs" style="left:40px;top:219px;width:1px;height:10px;background:#fff"></div><div class="abs" style="left:189px;top:219px;width:1px;height:10px;background:#c5c2b2"></div><div class="abs" style="left:190px;top:219px;width:1px;height:10px;background:#fff"></div><div class="abs" style="left:264px;top:219px;width:1px;height:10px;background:#c5c2b2"></div><div class="abs" style="left:265px;top:219px;width:1px;height:10px;background:#fff"></div><div class="abs" style="left:339px;top:219px;width:1px;height:10px;background:#c5c2b2"></div><div class="abs" style="left:340px;top:219px;width:1px;height:10px;background:#fff"></div><div class="abs" style="left:414px;top:219px;width:1px;height:10px;background:#c5c2b2"></div><div class="abs" style="left:415px;top:219px;width:1px;height:10px;background:#fff"></div><div class="abs" style="left:434px;top:219px;width:1px;height:10px;background:#c5c2b2"></div><div class="abs" style="left:435px;top:219px;width:1px;height:10px;background:#fff"></div>
<div class="abs" style="left:11px;top:341px;width:455px;height:18px;background:#ece9d8"></div>
<div class="abs" style="left:11px;top:216px;width:455px;height:255px;overflow:hidden"><div class="abs" style="left:-11px;top:-216px"><div class="t " style="left:17px;top:219px;letter-spacing:0.60px;">#</div><div class="t " style="left:46px;top:219px;letter-spacing:-0.41px;">Filename</div><div class="t " style="left:196px;top:219px;letter-spacing:0.15px;">Start</div><div class="t " style="left:271px;top:219px;letter-spacing:-0.52px;">End</div><div class="t " style="left:346px;top:219px;letter-spacing:-0.07px;">Duration</div><div class="t " style="left:422px;top:219px;letter-spacing:0.60px;">#</div><div class="t " style="left:441px;top:219px;letter-spacing:-0.07px;">Title</div><div class="t " style="left:18px;top:236px;letter-spacing:-0.12px;">1</div><div class="t " style="left:48px;top:236px;letter-spacing:-0.14px;">C:\Music\Elvis Presley - Lo...</div><div class="t " style="left:198px;top:236px;letter-spacing:0.12px;">00:00.00</div><div class="t " style="left:273px;top:236px;letter-spacing:0.12px;">00:33.42</div><div class="t " style="left:348px;top:236px;letter-spacing:0.12px;">00:33.42</div><div class="t " style="left:423px;top:236px;letter-spacing:-0.12px;">4</div><div class="t " style="left:443px;top:236px;letter-spacing:-0.21px;">Love</div><div class="t " style="left:18px;top:254px;letter-spacing:-0.12px;">2</div><div class="t " style="left:48px;top:254px;letter-spacing:-0.14px;">C:\Music\Elvis Presley - Lo...</div><div class="t " style="left:198px;top:254px;letter-spacing:0.12px;">00:33.42</div><div class="t " style="left:273px;top:254px;letter-spacing:0.12px;">01:06.84</div><div class="t " style="left:348px;top:254px;letter-spacing:0.12px;">00:33.42</div><div class="t " style="left:423px;top:254px;letter-spacing:-0.12px;">4</div><div class="t " style="left:443px;top:254px;letter-spacing:-0.21px;">Love</div><div class="t " style="left:18px;top:272px;letter-spacing:-0.12px;">3</div><div class="t " style="left:48px;top:272px;letter-spacing:-0.14px;">C:\Music\Elvis Presley - Lo...</div><div class="t " style="left:198px;top:272px;letter-spacing:0.12px;">01:06.84</div><div class="t " style="left:273px;top:272px;letter-spacing:0.12px;">01:40.26</div><div class="t " style="left:348px;top:272px;letter-spacing:0.12px;">00:33.42</div><div class="t " style="left:423px;top:272px;letter-spacing:-0.12px;">4</div><div class="t " style="left:443px;top:272px;letter-spacing:-0.21px;">Love</div><div class="t " style="left:18px;top:290px;letter-spacing:-0.12px;">4</div><div class="t " style="left:48px;top:290px;letter-spacing:-0.14px;">C:\Music\Elvis Presley - Lo...</div><div class="t " style="left:198px;top:290px;letter-spacing:0.12px;">01:40.26</div><div class="t " style="left:273px;top:290px;letter-spacing:0.12px;">02:13.68</div><div class="t " style="left:348px;top:290px;letter-spacing:0.12px;">00:33.42</div><div class="t " style="left:423px;top:290px;letter-spacing:-0.12px;">4</div><div class="t " style="left:443px;top:290px;letter-spacing:-0.21px;">Love</div><div class="t " style="left:18px;top:308px;letter-spacing:-0.12px;">5</div><div class="t " style="left:48px;top:308px;letter-spacing:-0.14px;">C:\Music\Elvis Presley - Lo...</div><div class="t " style="left:198px;top:308px;letter-spacing:0.12px;">02:13.68</div><div class="t " style="left:273px;top:308px;letter-spacing:0.22px;">02:47.11</div><div class="t " style="left:348px;top:308px;letter-spacing:0.12px;">00:33.42</div><div class="t " style="left:423px;top:308px;letter-spacing:-0.12px;">4</div><div class="t " style="left:443px;top:308px;letter-spacing:-0.21px;">Love</div><div class="t " style="left:18px;top:326px;letter-spacing:-0.12px;">6</div><div class="t " style="left:48px;top:326px;letter-spacing:-0.02px;">C:\Music\Jennifer Lopez - ...</div><div class="t " style="left:198px;top:326px;letter-spacing:0.12px;">02:54.79</div><div class="t " style="left:273px;top:326px;letter-spacing:0.12px;">02:56.95</div><div class="t " style="left:348px;top:326px;letter-spacing:0.12px;">00:02.16</div><div class="t " style="left:423px;top:326px;letter-spacing:-0.12px;">1</div><div class="t " style="left:443px;top:326px;letter-spacing:-0.35px;">Get R</div><div class="t " style="left:18px;top:344px;letter-spacing:-0.12px;">7</div><div class="t " style="left:48px;top:344px;letter-spacing:-0.02px;">C:\Music\Jennifer Lopez - ...</div><div class="t " style="left:198px;top:344px;letter-spacing:0.12px;">02:59.64</div><div class="t " style="left:273px;top:344px;letter-spacing:0.12px;">03:03.52</div><div class="t " style="left:348px;top:344px;letter-spacing:0.12px;">00:03.88</div><div class="t " style="left:423px;top:344px;letter-spacing:-0.12px;">1</div><div class="t " style="left:443px;top:344px;letter-spacing:-0.35px;">Get R</div></div></div>
<div class="abs" style="left:11px;top:471px;width:455px;height:17px;background:linear-gradient(#eeede5 0px,#f6f5f0 2px,#fcfcfa 6px,#fff 10px)"></div>
<div class="sbtn" style="left:11px;top:471px"><svg width="15" height="15" viewBox="0 0 15 15" style="position:absolute;left:0;top:0"><path d="M9.6,3 L5.4,7.5 L9.6,12" fill="none" stroke="#4d6185" stroke-width="2.3"/></svg></div>
<div class="sbtn" style="left:449px;top:471px"><svg width="15" height="15" viewBox="0 0 15 15" style="position:absolute;left:0;top:0"><path d="M5.4,3 L9.6,7.5 L5.4,12" fill="none" stroke="#4d6185" stroke-width="2.3"/></svg></div>
<div class="sbtn" style="left:28px;top:471px;width:273px;background:linear-gradient(#cbd8fc,#bfd0f9 45%,#b4c7f5)"><div class="abs" style="left:131px;top:4px;width:8px;height:7px;background:repeating-linear-gradient(to right,#eef4fe 0 1px,#8cb0f8 1px 2px)"></div></div>

<!-- Place group -->
<div class="gb" style="left:7px;top:498px;width:463px;height:49px"></div>
<div class="gbl" style="left:12px;top:498px;width:101px"></div>
<div class="t blue" style="left:14px;top:493px;letter-spacing:-0.12px;">Place splitted files to</div>
<div class="abs" style="left:15px;top:510px;width:13px;height:13px;border-radius:50%;border:1px solid #1c5180;box-sizing:border-box;background:linear-gradient(135deg,#dcdcd2 10%,#f6f6f2 50%,#fff 80%)"><div class="abs" style="left:3px;top:3px;width:5px;height:5px;border-radius:50%;background:radial-gradient(circle at 35% 35%,#7be06a,#21a121 70%)"></div></div>
<div class="abs" style="left:15px;top:526px;width:13px;height:13px;border-radius:50%;border:1px solid #1c5180;box-sizing:border-box;background:linear-gradient(135deg,#dcdcd2 10%,#f6f6f2 50%,#fff 80%)"></div>
<div class="t " style="left:30px;top:511px;letter-spacing:0.12px;">Input folder</div><div class="t " style="left:30px;top:527px;letter-spacing:-0.15px;">Specify folder</div>
<div class="abs edit" style="left:151px;top:522px;width:311px;height:21px"></div>
<div class="t " style="left:154px;top:526px;letter-spacing:-0.27px;color:#aca899">C:\My Music</div>
<div class="abs" style="left:439px;top:524px;width:21px;height:18px;background:#ece9d8;box-sizing:border-box;border:1px solid #fff;border-right:2px solid #111;border-bottom:2px solid #111"></div>

<!-- Splitting mode -->
<div class="gb" style="left:474px;top:205px;width:225px;height:187px"></div>
<div class="gbl" style="left:479px;top:205px;width:70px"></div>
<div class="t blue" style="left:481px;top:200px;letter-spacing:-0.19px;">Splitting mode</div>
<div class="abs" style="left:482px;top:235px;width:207px;height:115px;box-sizing:border-box;border:1px solid #919b9c;background:linear-gradient(#fcfcfe,#f4f3ee)"></div>
<div class="abs" style="left:532px;top:217px;width:49px;height:18px;box-sizing:border-box;border:1px solid #919b9c;border-bottom:none;border-radius:3px 3px 0 0;background:linear-gradient(#fefefd,#f7f6f1 70%,#eeece0)"></div>
<div class="abs" style="left:482px;top:215px;width:51px;height:21px;box-sizing:border-box;border:1px solid #919b9c;border-bottom:none;border-radius:3px 3px 0 0;background:#fcfcfe"></div>
<div class="abs" style="left:482px;top:215px;width:51px;height:3px;border-radius:3px 3px 0 0;background:linear-gradient(#e68b2c,#ffc73c)"></div>
<div class="t " style="left:489px;top:219px;letter-spacing:-0.24px;">By time</div><div class="t " style="left:536px;top:221px;letter-spacing:-0.04px;">By parts</div>
<div class="t " style="left:487px;top:252px;letter-spacing:0.15px;">Start</div><div class="abs edit" style="left:564px;top:247px;width:65px;height:21px"></div><div class="t " style="left:567px;top:251px;letter-spacing:0.12px;">02:59.64</div><div class="abs" style="left:632px;top:247px;width:13px;height:21px;background:#fff"></div><div class="abs" style="left:633px;top:248px;width:11px;height:19px;border-radius:2px;background:linear-gradient(135deg,#cbd8fb,#b3c6f5)"></div><div class="abs" style="left:632px;top:257px;width:13px;height:1px;background:#ece9d8"></div><svg class="abs" style="left:633px;top:248px" width="11" height="19" viewBox="0 0 11 19"><path d="M2.5,6.7 L5.5,3.3 L8.5,6.7 L6.9,6.7 L5.5,5.3 L4.1,6.7Z M2.5,13 L5.5,16.4 L8.5,13 L6.9,13 L5.5,14.4 L4.1,13Z" fill="#4d6185" stroke="#4d6185" stroke-width="0.6"/></svg><div class="abs" style="left:646px;top:247px;width:13px;height:21px;background:#fff"></div><div class="abs" style="left:647px;top:248px;width:11px;height:19px;border-radius:2px;background:linear-gradient(135deg,#cbd8fb,#b3c6f5)"></div><div class="abs" style="left:646px;top:257px;width:13px;height:1px;background:#ece9d8"></div><svg class="abs" style="left:647px;top:248px" width="11" height="19" viewBox="0 0 11 19"><path d="M2.5,6.7 L5.5,3.3 L8.5,6.7 L6.9,6.7 L5.5,5.3 L4.1,6.7Z M2.5,13 L5.5,16.4 L8.5,13 L6.9,13 L5.5,14.4 L4.1,13Z" fill="#4d6185" stroke="#4d6185" stroke-width="0.6"/></svg><div class="t " style="left:487px;top:276px;letter-spacing:-0.52px;">End</div><div class="abs edit" style="left:564px;top:271px;width:66px;height:21px"></div><div class="t " style="left:567px;top:275px;letter-spacing:0.12px;">03:03.52</div><div class="abs" style="left:632px;top:271px;width:13px;height:21px;background:#fff"></div><div class="abs" style="left:633px;top:272px;width:11px;height:19px;border-radius:2px;background:linear-gradient(135deg,#cbd8fb,#b3c6f5)"></div><div class="abs" style="left:632px;top:281px;width:13px;height:1px;background:#ece9d8"></div><svg class="abs" style="left:633px;top:272px" width="11" height="19" viewBox="0 0 11 19"><path d="M2.5,6.7 L5.5,3.3 L8.5,6.7 L6.9,6.7 L5.5,5.3 L4.1,6.7Z M2.5,13 L5.5,16.4 L8.5,13 L6.9,13 L5.5,14.4 L4.1,13Z" fill="#4d6185" stroke="#4d6185" stroke-width="0.6"/></svg><div class="abs" style="left:646px;top:271px;width:13px;height:21px;background:#fff"></div><div class="abs" style="left:647px;top:272px;width:11px;height:19px;border-radius:2px;background:linear-gradient(135deg,#cbd8fb,#b3c6f5)"></div><div class="abs" style="left:646px;top:281px;width:13px;height:1px;background:#ece9d8"></div><svg class="abs" style="left:647px;top:272px" width="11" height="19" viewBox="0 0 11 19"><path d="M2.5,6.7 L5.5,3.3 L8.5,6.7 L6.9,6.7 L5.5,5.3 L4.1,6.7Z M2.5,13 L5.5,16.4 L8.5,13 L6.9,13 L5.5,14.4 L4.1,13Z" fill="#4d6185" stroke="#4d6185" stroke-width="0.6"/></svg><div class="t " style="left:487px;top:300px;letter-spacing:-0.07px;">Duration</div><div class="abs edit" style="left:564px;top:295px;width:66px;height:21px"></div><div class="t " style="left:567px;top:299px;letter-spacing:0.12px;">00:03.88</div><div class="abs" style="left:632px;top:295px;width:13px;height:21px;background:#fff"></div><div class="abs" style="left:633px;top:296px;width:11px;height:19px;border-radius:2px;background:linear-gradient(135deg,#cbd8fb,#b3c6f5)"></div><div class="abs" style="left:632px;top:305px;width:13px;height:1px;background:#ece9d8"></div><svg class="abs" style="left:633px;top:296px" width="11" height="19" viewBox="0 0 11 19"><path d="M2.5,6.7 L5.5,3.3 L8.5,6.7 L6.9,6.7 L5.5,5.3 L4.1,6.7Z M2.5,13 L5.5,16.4 L8.5,13 L6.9,13 L5.5,14.4 L4.1,13Z" fill="#4d6185" stroke="#4d6185" stroke-width="0.6"/></svg><div class="abs" style="left:646px;top:295px;width:13px;height:21px;background:#fff"></div><div class="abs" style="left:647px;top:296px;width:11px;height:19px;border-radius:2px;background:linear-gradient(135deg,#cbd8fb,#b3c6f5)"></div><div class="abs" style="left:646px;top:305px;width:13px;height:1px;background:#ece9d8"></div><svg class="abs" style="left:647px;top:296px" width="11" height="19" viewBox="0 0 11 19"><path d="M2.5,6.7 L5.5,3.3 L8.5,6.7 L6.9,6.7 L5.5,5.3 L4.1,6.7Z M2.5,13 L5.5,16.4 L8.5,13 L6.9,13 L5.5,14.4 L4.1,13Z" fill="#4d6185" stroke="#4d6185" stroke-width="0.6"/></svg><div class="t " style="left:487px;top:324px;letter-spacing:-0.08px;">Duration (sec)</div><div class="abs edit" style="left:564px;top:319px;width:66px;height:21px"></div><div class="t " style="left:566px;top:323px;width:56.5px;letter-spacing:0.10px;text-align:right;">3,88</div><div class="abs" style="left:632px;top:319px;width:13px;height:21px;background:#fff"></div><div class="abs" style="left:633px;top:320px;width:11px;height:19px;border-radius:2px;background:linear-gradient(135deg,#cbd8fb,#b3c6f5)"></div><div class="abs" style="left:632px;top:329px;width:13px;height:1px;background:#ece9d8"></div><svg class="abs" style="left:633px;top:320px" width="11" height="19" viewBox="0 0 11 19"><path d="M2.5,6.7 L5.5,3.3 L8.5,6.7 L6.9,6.7 L5.5,5.3 L4.1,6.7Z M2.5,13 L5.5,16.4 L8.5,13 L6.9,13 L5.5,14.4 L4.1,13Z" fill="#4d6185" stroke="#4d6185" stroke-width="0.6"/></svg><div class="abs" style="left:646px;top:319px;width:13px;height:21px;background:#fff"></div><div class="abs" style="left:647px;top:320px;width:11px;height:19px;border-radius:2px;background:linear-gradient(135deg,#cbd8fb,#b3c6f5)"></div><div class="abs" style="left:646px;top:329px;width:13px;height:1px;background:#ece9d8"></div><svg class="abs" style="left:647px;top:320px" width="11" height="19" viewBox="0 0 11 19"><path d="M2.5,6.7 L5.5,3.3 L8.5,6.7 L6.9,6.7 L5.5,5.3 L4.1,6.7Z M2.5,13 L5.5,16.4 L8.5,13 L6.9,13 L5.5,14.4 L4.1,13Z" fill="#4d6185" stroke="#4d6185" stroke-width="0.6"/></svg>
<div class="btn" style="left:483px;top:360px;width:63px;height:23px;box-shadow:inset 0 0 0 1px #bcd0f5,inset 0 -2px 0 0 #8eaee8,inset 2px 0 0 0 #a8c0ee"><div class="abs" style="left:1px;top:1px;width:59px;height:19px;border:1px dotted #3a2a10;box-sizing:border-box"></div><u>A</u>dd</div>
<div class="btn" style="left:555px;top:360px;width:63px;height:23px"><u>C</u>hange</div>
<div class="btn" style="left:627px;top:360px;width:63px;height:23px"><u>D</u>elete</div>

<!-- ID3 -->
<div class="gb" style="left:474px;top:400px;width:225px;height:152px"></div>
<div class="gbl" style="left:479px;top:400px;width:44px"></div>
<div class="t blue" style="left:481px;top:395px;letter-spacing:0.00px;">ID3 tags</div>
<div class="t " style="left:481.4px;top:411px;letter-spacing:-0.07px;">Title</div><div class="abs edit" style="left:551px;top:406px;width:140px;height:21px"></div><div class="t " style="left:553.2px;top:410px;letter-spacing:-0.16px;">Get Right</div><div class="t " style="left:481.4px;top:435px;letter-spacing:0.16px;">Artist</div><div class="abs edit" style="left:551px;top:430px;width:140px;height:21px"></div><div class="t " style="left:553.2px;top:434px;letter-spacing:-0.15px;">Jennifer Lopez</div><div class="t " style="left:481.4px;top:459px;letter-spacing:-0.44px;">Album</div><div class="abs edit" style="left:551px;top:454px;width:140px;height:21px"></div><div class="t " style="left:553.2px;top:458px;letter-spacing:-0.07px;">Rebirth</div><div class="t " style="left:481.4px;top:483px;letter-spacing:-0.31px;">Genre</div><div class="abs edit" style="left:551px;top:478px;width:140px;height:21px"></div><div class="t " style="left:553.2px;top:482px;letter-spacing:-0.07px;">Latin</div><div class="t " style="left:481.4px;top:507px;letter-spacing:-0.06px;">Year</div><div class="abs edit" style="left:551px;top:502px;width:49px;height:21px"></div><div class="t " style="left:553.2px;top:506px;letter-spacing:-0.12px;">2005</div><div class="t " style="left:481.4px;top:531px;letter-spacing:-0.38px;">Comment</div><div class="abs edit" style="left:551px;top:526px;width:140px;height:21px"></div><div class="t " style="left:553.2px;top:530px;letter-spacing:-0.33px;">My Music Collection</div><div class="abs edit" style="left:623px;top:502px;width:68px;height:21px"></div><div class="t " style="left:626px;top:506px;letter-spacing:-0.12px;">1</div><div class="t " style="left:608px;top:507px;letter-spacing:0.60px;">#</div><div class="abs" style="left:674px;top:480px;width:15px;height:17px;border-radius:2px;background:linear-gradient(#cfdcfd,#b4c8f6);border:1px solid #b5c5f0;box-sizing:border-box"><svg width="14" height="16" viewBox="0 0 14 16" style="position:absolute;left:-1px;top:-1px"><path d="M3.5,6 L7,9.5 L10.5,6" fill="none" stroke="#4d6185" stroke-width="2"/></svg></div>

<!-- status bar -->
<div class="abs" style="left:4px;top:552px;width:698px;height:1px;background:#a5a291"></div>
<div class="abs" style="left:4px;top:553px;width:698px;height:18px;background:linear-gradient(#d8d5c2,#ebe8d6 15%,#f1efe2 40%,#ece9d8)"></div>
<div class="abs" style="left:500px;top:554px;width:1px;height:16px;background:#c5c2b2"></div>
<div class="abs" style="left:501px;top:554px;width:1px;height:16px;background:#fff"></div>
<svg class="abs" style="left:689px;top:558px" width="13" height="13" viewBox="0 0 13 13" shape-rendering="crispEdges"><g fill="#fff"><rect x="10" y="2" width="2" height="2"/><rect x="6" y="6" width="2" height="2"/><rect x="10" y="6" width="2" height="2"/><rect x="2" y="10" width="2" height="2"/><rect x="6" y="10" width="2" height="2"/><rect x="10" y="10" width="2" height="2"/></g><g fill="#b8b4a2"><rect x="9" y="1" width="2" height="2"/><rect x="5" y="5" width="2" height="2"/><rect x="9" y="5" width="2" height="2"/><rect x="1" y="9" width="2" height="2"/><rect x="5" y="9" width="2" height="2"/><rect x="9" y="9" width="2" height="2"/></g></svg>
<div class="t nf" style="left:280px;top:557px;font-family:'Liberation Serif',serif;font-size:17.5px;line-height:20px;height:20px;color:#fdfdfb;letter-spacing:0.3px;text-shadow:0.5px 0 0 rgba(255,255,255,0.9),1px 1px 1px rgba(100,100,92,0.7),-1px -1px 2px rgba(255,255,255,0.5)">G<span style="font-size:12px">EAR</span>D<span style="font-size:12px">OWNLOAD.COM</span></div>
</div></div>
</div>
</body></html>
